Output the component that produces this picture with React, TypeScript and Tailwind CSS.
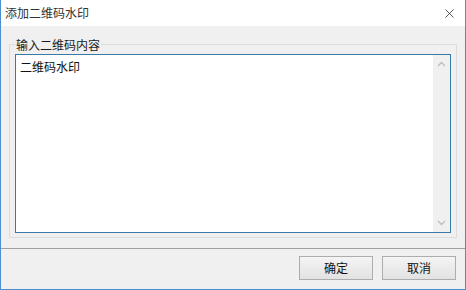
import { X } from 'lucide-react'

const font = { fontFamily: '"Noto Sans CJK SC", "Noto Sans", sans-serif' }

export default function App() {
  return (
    <div
      className="flex h-[290px] w-[466px] flex-col border-x border-b border-[#4a8fcf] bg-[#f0f0f0] text-[#000]"
      style={font}
    >
      <TitleBar />
      <div className="flex flex-1 flex-col">
        <fieldset className="mx-[8px] mt-[10px] h-[202px] border border-[#dcdcdc] px-[5px] pb-[4px] pt-[1px]">
          <legend className="px-[1px] text-[12px] leading-[17px] text-[#1a1a1a]">输入二维码内容</legend>
          <div className="flex h-[179px] border border-[#3a78a6] bg-white">
            <div className="flex-1 px-[4px] pt-[3px] text-[12px] leading-[18px] text-[#111]">二维码水印</div>
            <ScrollBar />
          </div>
        </fieldset>
        <div className="mt-[10px] h-px bg-[#a0a0a0]" />
        <div className="flex justify-end gap-[9px] pr-[9px] pt-[7px]">
          <Button label="确定" />
          <Button label="取消" />
        </div>
      </div>
    </div>
  )
}

function TitleBar() {
  return (
    <div className="flex h-[26px] items-center justify-between bg-white pl-[4px] pr-[8px]">
      <span className="text-[12px] leading-none text-[#333]">添加二维码水印</span>
      <X size={15} strokeWidth={1.2} color="#222" />
    </div>
  )
}

function ScrollBar() {
  return (
    <div className="flex w-[17px] flex-col items-center justify-between bg-[#f0f0f0] py-[6px]">
      <Chevron up />
      <Chevron />
    </div>
  )
}

function Chevron({ up = false }: { up?: boolean }) {
  return (
    <svg width="9" height="6" viewBox="0 0 9 6" aria-hidden>
      <path
        d={up ? 'M1 5L4.5 1.5L8 5' : 'M1 1L4.5 4.5L8 1'}
        fill="none"
        stroke="#bdbdbd"
        strokeWidth="1.3"
      />
    </svg>
  )
}

function Button({ label }: { label: string }) {
  return (
    <button
      type="button"
      className="flex h-[24px] w-[74px] items-center justify-center border border-[#adadad] bg-gradient-to-b from-[#f4f4f4] to-[#e2e2e2] text-[12px] leading-none text-[#111]"
    >
      {label}
    </button>
  )
}
